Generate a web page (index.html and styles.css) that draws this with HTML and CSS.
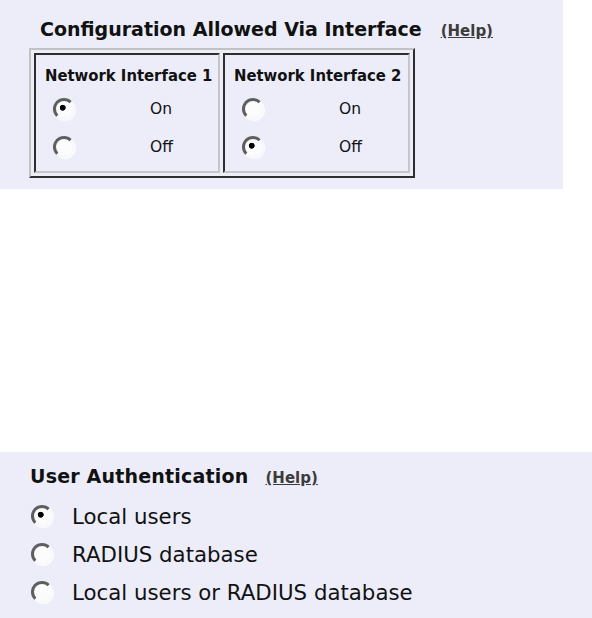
FILE: index.html
```html
<!DOCTYPE html>
<html>
<head>
<meta charset="utf-8">
<title>Configuration</title>
<link rel="stylesheet" href="styles.css">
</head>
<body>
<section class="panel panel-config">
  <h2 class="title">Configuration Allowed Via Interface<a class="help" href="#">(Help)</a></h2>
  <table class="iface-table">
    <tr>
      <td class="iface iface-1">
        <div class="iface-name">Network Interface 1</div>
        <label class="opt opt-first"><input type="radio" name="if1" class="radio" checked><span>On</span></label>
        <label class="opt"><input type="radio" name="if1" class="radio"><span>Off</span></label>
      </td>
      <td class="iface iface-2">
        <div class="iface-name">Network Interface 2</div>
        <label class="opt opt-first"><input type="radio" name="if2" class="radio"><span>On</span></label>
        <label class="opt"><input type="radio" name="if2" class="radio" checked><span>Off</span></label>
      </td>
    </tr>
  </table>
</section>

<section class="panel panel-auth">
  <h2 class="title title-auth">User Authentication<a class="help" href="#">(Help)</a></h2>
  <div class="auth-list">
    <label class="auth-opt"><input type="radio" name="auth" class="radio" checked><span>Local users</span></label>
    <label class="auth-opt"><input type="radio" name="auth" class="radio"><span>RADIUS database</span></label>
    <label class="auth-opt"><input type="radio" name="auth" class="radio"><span>Local users or RADIUS database</span></label>
  </div>
</section>
</body>
</html>
```
FILE: styles.css
```css
body {
  margin: 0;
  background: #ffffff;
  font-family: "DejaVu Sans", "Liberation Sans", sans-serif;
  color: #111111;
}

.panel {
  background: #ecedf9;
  box-sizing: border-box;
}

.panel-config {
  width: 563px;
  height: 189px;
  padding: 18px 0 0 29px;
}

.title {
  margin: 0 0 0 11px;
  font-size: 19px;
  line-height: 22px;
  font-weight: bold;
  white-space: nowrap;
}

.title-auth {
  margin-left: 0;
  letter-spacing: 0.2px;
}

.help {
  margin-left: 19px;
  font-size: 15px;
  font-weight: bold;
  letter-spacing: 0;
  color: #3c3c3c;
  text-decoration: underline;
}

.title-auth .help {
  margin-left: 17px;
}

.iface-table {
  margin-top: 6px;
  border-collapse: separate;
  border-spacing: 3px;
  border: 2px solid;
  border-color: #c2c2c2 #2e2e2e #2e2e2e #c2c2c2;
}

.iface {
  box-sizing: border-box;
  height: 120px;
  padding: 11px 0 0 9px;
  border: 2px solid;
  border-color: #2e2e2e #c6c6c6 #c6c6c6 #2e2e2e;
  vertical-align: top;
}

.iface-1 { width: 186px; }
.iface-2 { width: 187px; }

.iface-name {
  font-family: "DejaVu Sans Condensed", "DejaVu Sans", sans-serif;
  font-stretch: condensed;
  font-weight: bold;
  font-size: 16.5px;
  line-height: 20px;
  white-space: nowrap;
}

.opt {
  display: grid;
  grid-template-columns: 22px auto;
  column-gap: 75px;
  align-items: center;
  height: 38px;
  padding-left: 8px;
  font-size: 15.5px;
}

.opt-first {
  margin-top: 4px;
}

.radio {
  appearance: none;
  -webkit-appearance: none;
  box-sizing: border-box;
  margin: 0;
  width: 22px;
  height: 22px;
  border-radius: 50%;
  border: 3px solid;
  border-color: #5e5e5e #f9f9fc #f9f9fc #5e5e5e;
  background: #fcfcfc;
  box-shadow: 1px 1px 1px rgba(255, 255, 255, 0.8);
}

.radio:checked {
  background: radial-gradient(circle at 42% 42%, #000000 0 2.6px, #fcfcfc 3.3px);
}

.panel-auth {
  margin-top: 263px;
  height: 166px;
  padding: 13px 0 0 30px;
}

.auth-list {
  margin-top: 8px;
}

.auth-opt {
  display: flex;
  align-items: center;
  gap: 19px;
  height: 38px;
  padding-left: 1px;
  font-size: 21.3px;
}
```
